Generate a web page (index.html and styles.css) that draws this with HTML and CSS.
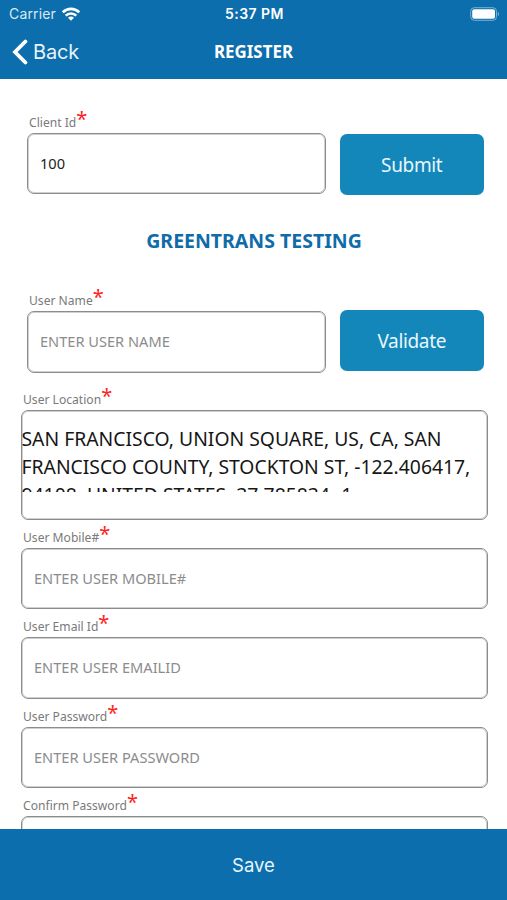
FILE: index.html
```html
<!DOCTYPE html>
<html lang="en">
<head>
<meta charset="utf-8">
<title>Register</title>
<link rel="stylesheet" href="styles.css">
</head>
<body>
<div class="screen">
  <header class="header">
    <div class="status">
      <div class="carrier">
        <span>Carrier</span>
        <svg class="wifi" width="18" height="14" viewBox="0 0 18 14" fill="none" stroke="#fff" stroke-width="2.6">
          <path d="M.8 5.200C5.400.7 12.600.7 17.200 5.200"/>
          <path d="M3.700 8.600c3-2.900 7.600-2.900 10.600 0"/>
          <path d="M9 13.800 6 10.800c1.700-1.600 4.300-1.600 6 0Z" fill="#fff" stroke="none"/>
        </svg>
      </div>
      <span class="time">5:37 PM</span>
      <svg class="battery" width="30" height="14" viewBox="0 0 30 14">
        <rect x=".7" y=".7" width="25.800" height="12.600" rx="3.600" fill="none" stroke="#7db1d6" stroke-width="1"/>
        <rect x="2.200" y="2.200" width="22.800" height="9.600" rx="2" fill="#fff"/>
        <path d="M27.800 5v4c1.800-.7 1.800-3.300 0-4Z" fill="#7db1d6"/>
      </svg>
    </div>
    <nav class="nav">
      <a class="back">
        <svg width="16" height="26" viewBox="0 0 16 26" fill="none" stroke="#fff" stroke-width="3.800" stroke-linecap="round" stroke-linejoin="miter"><path d="M13.400 2.500 3 13l10.400 10.500"/></svg>
        <span>Back</span>
      </a>
      <h1 class="title">REGISTER</h1>
    </nav>
  </header>
  <main class="form">
    <div class="row row-client">
      <div class="field">
        <label class="label">Client Id<span class="req">*</span></label>
        <div class="box"><span class="value">100</span></div>
      </div>
      <button class="button">Submit</button>
    </div>
    <h2 class="company">GREENTRANS TESTING</h2>
    <div class="row row-user">
      <div class="field">
        <label class="label">User Name<span class="req">*</span></label>
        <div class="box"><span class="hint">ENTER USER NAME</span></div>
      </div>
      <button class="button">Validate</button>
    </div>
    <div class="field location">
      <label class="label">User Location<span class="req">*</span></label>
      <div class="box area"><p class="address">SAN FRANCISCO, UNION SQUARE, US, CA, SAN<br>FRANCISCO COUNTY, STOCKTON ST, -122.406417,<br>94108, UNITED STATES, 37.785834,-1</p></div>
    </div>
    <div class="field">
      <label class="label">User Mobile#<span class="req">*</span></label>
      <div class="box"><span class="hint">ENTER USER MOBILE#</span></div>
    </div>
    <div class="field">
      <label class="label">User Email Id<span class="req">*</span></label>
      <div class="box"><span class="hint">ENTER USER EMAILID</span></div>
    </div>
    <div class="field">
      <label class="label">User Password<span class="req">*</span></label>
      <div class="box"><span class="hint">ENTER USER PASSWORD</span></div>
    </div>
    <div class="field">
      <label class="label">Confirm Password<span class="req">*</span></label>
      <div class="box"></div>
    </div>
  </main>
  <button class="save">Save</button>
</div>
</body>
</html>
```
FILE: styles.css
```css
* { box-sizing: border-box; }
body { margin: 0; background: #fff; font-family: "Noto Sans", "Open Sans", sans-serif; }
h1, h2, p { margin: 0; }
button { border: 0; padding: 0; font-family: inherit; }
.screen { width: 507px; height: 900px; display: flex; flex-direction: column; overflow: hidden; }
.header { height: 79px; flex: none; background: #0c6eac; color: #fff; }
.status { height: 27px; padding: 0 7px 0 9px; display: grid; grid-template-columns: 1fr auto 1fr; align-items: center; font-family: Inter, sans-serif; font-size: 14px; }
.carrier { display: flex; align-items: center; gap: 6px; color: #d9e9f5; letter-spacing: .15px; }
.time { font-weight: 600; letter-spacing: .45px; }
.battery { justify-self: end; }
.nav { height: 50px; display: grid; grid-template-columns: 1fr auto 1fr; align-items: center; padding: 0 12px; }
.back { display: flex; align-items: center; gap: 5px; font-family: Inter, sans-serif; font-size: 20px; color: #e8f3fa; letter-spacing: -.2px; }
.title { font-size: 16.900px; font-weight: 700; line-height: 24px; }
.form { flex: 1; min-height: 0; overflow: hidden; padding: 26px 19.5px 0 20.500px; }
.row { display: flex; gap: 14px; align-items: flex-end; padding: 0 4px 0 6px; }
.row .field { width: 299.500px; }
.label { display: flex; height: 28px; padding: 8px 0 0 2.500px; font-size: 12.100px; line-height: 20px; color: #7a7a7a; }
.req { color: #f22; font-size: 20px; line-height: 20px; margin: -4px 0 0 0; }
.box { height: 61.330px; border: 1px solid #8c8c8c; box-shadow: inset 0 0 0 1px #d0d0d0; border-radius: 7px; padding: 0 12.500px 1px; display: flex; align-items: center; font-size: 14.600px; }
.value { color: #222; }
.hint { color: #8c8c8c; }
.button { flex: 1; height: 61px; border-radius: 7px; background: #1487ba; color: #e9f6fc; font-size: 19px; letter-spacing: -.35px; }
.row-client .button { margin-bottom: -1px; }
.row-user .button { margin-bottom: 2px; padding-top: 1px; }
.company { margin: 33px 0 28px; text-align: center; font-size: 19.500px; line-height: 28px; color: #0f6ca8; font-weight: 700; }
.location { margin-top: 9.500px; }
.area { height: 109.700px; padding: 13.500px 0 0; align-items: flex-start; }
.address { height: 67px; overflow: hidden; font-size: 19.330px; line-height: 28.200px; color: #161616; white-space: nowrap; }
.save { flex: none; height: 71px; background: #0c6eac; color: #e9f6fc; font-family: Inter, sans-serif; font-size: 18.500px; }
```
